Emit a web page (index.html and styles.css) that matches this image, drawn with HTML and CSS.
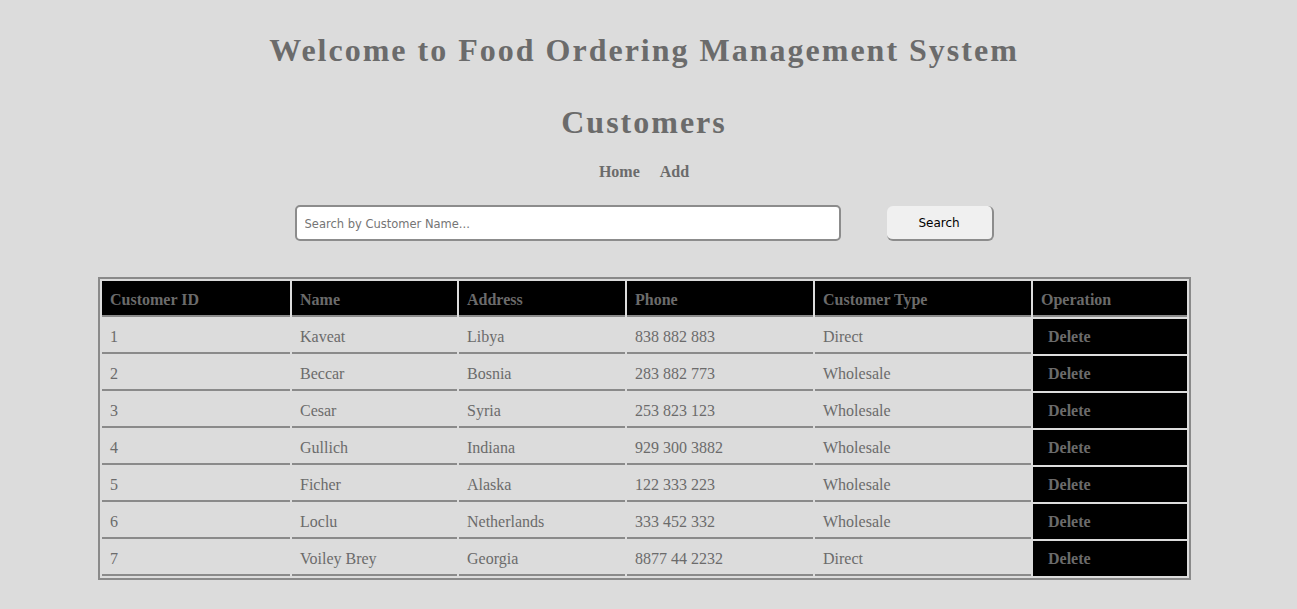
FILE: index.html
```html
<!DOCTYPE html>
<html>
<head>
<meta charset="utf-8">
<title>Customers</title>
<link rel="stylesheet" href="styles.css">
</head>
<body>
<h1 class="title">Welcome to Food Ordering Management System</h1>
<h2 class="subtitle">Customers</h2>
<nav class="nav">
  <a href="#">Home</a>
  <a href="#">Add</a>
</nav>
<form class="search">
  <input class="search-input" type="text" placeholder="Search by Customer Name...">
  <button class="search-btn" type="button">Search</button>
</form>
<table class="grid">
  <colgroup>
    <col class="c1"><col class="c2"><col class="c3"><col class="c4"><col class="c5"><col class="c6">
  </colgroup>
  <thead>
    <tr><th>Customer ID</th><th>Name</th><th>Address</th><th>Phone</th><th>Customer Type</th><th>Operation</th></tr>
  </thead>
  <tbody>
    <tr><td>1</td><td>Kaveat</td><td>Libya</td><td>838 882 883</td><td>Direct</td><td class="op"><a href="#">Delete</a></td></tr>
    <tr><td>2</td><td>Beccar</td><td>Bosnia</td><td>283 882 773</td><td>Wholesale</td><td class="op"><a href="#">Delete</a></td></tr>
    <tr><td>3</td><td>Cesar</td><td>Syria</td><td>253 823 123</td><td>Wholesale</td><td class="op"><a href="#">Delete</a></td></tr>
    <tr><td>4</td><td>Gullich</td><td>Indiana</td><td>929 300 3882</td><td>Wholesale</td><td class="op"><a href="#">Delete</a></td></tr>
    <tr><td>5</td><td>Ficher</td><td>Alaska</td><td>122 333 223</td><td>Wholesale</td><td class="op"><a href="#">Delete</a></td></tr>
    <tr><td>6</td><td>Loclu</td><td>Netherlands</td><td>333 452 332</td><td>Wholesale</td><td class="op"><a href="#">Delete</a></td></tr>
    <tr><td>7</td><td>Voiley Brey</td><td>Georgia</td><td>8877 44 2232</td><td>Direct</td><td class="op"><a href="#">Delete</a></td></tr>
  </tbody>
</table>
</body>
</html>
```
FILE: styles.css
```css
html, body {
  background: #dcdcdc;
}
body {
  margin: 8px 17px 8px 8px;
  font-family: "Liberation Serif", "Times New Roman", serif;
  color: #6b6b6b;
}
.title {
  margin: 24px 0 0;
  text-align: center;
  font-size: 32px;
  font-weight: bold;
  letter-spacing: 2px;
  line-height: 37px;
}
.subtitle {
  margin: 35px 0 0;
  text-align: center;
  font-size: 32px;
  font-weight: bold;
  letter-spacing: 2px;
  line-height: 37px;
}
.nav {
  margin-top: 22px;
  display: flex;
  justify-content: center;
  gap: 20px;
  font-size: 16px;
  font-weight: bold;
}
.nav a {
  color: #6b6b6b;
  text-decoration: none;
}
.search {
  margin-top: 24px;
  display: flex;
  justify-content: center;
  align-items: center;
  gap: 46px;
}
.search-input {
  box-sizing: border-box;
  width: 546px;
  height: 36px;
  border: 2px solid #8c8c8c;
  border-radius: 5px;
  background: #fff;
  padding: 2px 8px 0;
  font-family: "DejaVu Sans", Verdana, sans-serif;
  font-size: 11.5px;
  color: #333;
  outline: none;
}
.search-input::placeholder {
  color: #757575;
}
.search-btn {
  box-sizing: border-box;
  width: 107px;
  height: 35px;
  border: none;
  border-right: 2px solid #8c8c8c;
  border-bottom: 2px solid #8c8c8c;
  border-radius: 6px;
  background: #f0f0f0;
  padding-top: 3px;
  font-family: "DejaVu Sans", Verdana, sans-serif;
  font-size: 12px;
  color: #000;
}
.grid {
  margin: 36px 0 0 90px;
  width: 1091px;
  table-layout: fixed;
  border: 2px solid #8a8a8a;
  border-spacing: 2px;
  border-collapse: separate;
  font-size: 16px;
}
.c1 { width: 188px; }
.c2 { width: 165px; }
.c3 { width: 166px; }
.c4 { width: 186px; }
.c5 { width: 216px; }
.c6 { width: 154px; }
.grid th, .grid td {
  text-align: left;
  padding: 3px 8px 0;
  height: 35px;
  box-sizing: border-box;
  border-bottom: 2px solid #8a8a8a;
}
.grid th {
  height: 36px;
  background: #000;
  color: #6b6b6b;
  font-weight: bold;
}
.grid td.op {
  background: #000;
  border-bottom-color: #000;
}
.op a {
  color: #6b6b6b;
  font-weight: bold;
  text-decoration: none;
  padding-left: 7px;
}
```
